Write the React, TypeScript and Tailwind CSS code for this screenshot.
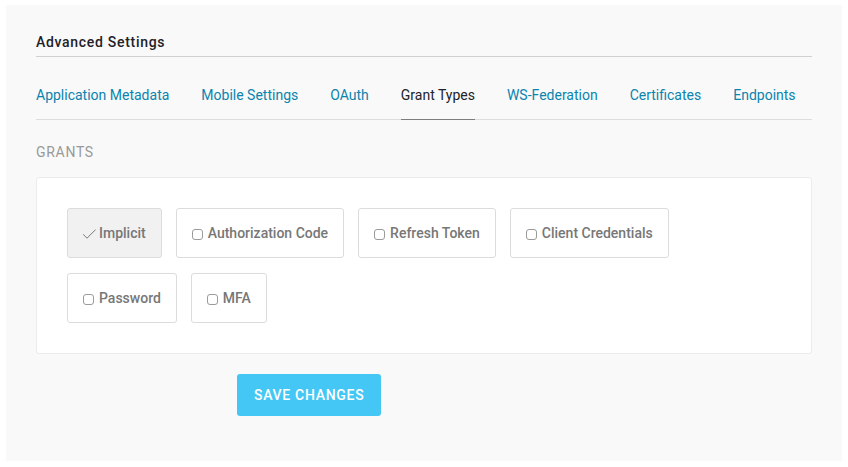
import { useState } from "react";

const tabs = [
  "Application Metadata",
  "Mobile Settings",
  "OAuth",
  "Grant Types",
  "WS-Federation",
  "Certificates",
  "Endpoints",
];

const grants = [
  "Implicit",
  "Authorization Code",
  "Refresh Token",
  "Client Credentials",
  "Password",
  "MFA",
];

function GrantOption({ name, locked }: { name: string; locked: boolean }) {
  const [checked, setChecked] = useState(locked);
  return (
    <label
      className={`flex h-[50px] items-center gap-[5px] rounded-[3px] border border-[#dcdcdc] px-[15px] text-sm font-medium text-[#777777] ${
        checked ? "bg-[#f1f1f1]" : "bg-white"
      }`}
    >
      <span className="grid h-3 w-[11px] items-center justify-items-start">
        <input
          type="checkbox"
          checked={checked}
          onChange={(e) => setChecked(e.target.checked)}
          className="peer col-start-1 row-start-1 mt-0.5 h-[11px] w-[11px] appearance-none rounded-[3px] border border-[#9b9b9b] bg-white checked:border-transparent checked:bg-transparent"
        />
        <svg
          viewBox="0 0 13 10"
          className="pointer-events-none invisible col-start-1 row-start-1 h-[10px] w-[13px] peer-checked:visible"
          fill="none"
          stroke="#777777"
          strokeWidth="1"
        >
          <path d="M0 5.2 L4 9.2 L12.6 0.6" />
        </svg>
      </span>
      <span>{name}</span>
    </label>
  );
}

export default function App() {
  return (
    <div className="bg-white px-1.5 pt-[5px] pb-1.5 font-['Roboto','Liberation_Sans',sans-serif]">
      <main className="bg-[#f9f9f9] px-[30px] pt-7 pb-[45px]">
        <h1 className="border-b border-[#d0d0d0] pb-1 text-sm leading-[19px] font-medium tracking-wider text-[#222228]">
          Advanced Settings
        </h1>

        <nav className="mt-[23px] flex gap-8 border-b border-[#dddddd] text-sm">
          {tabs.map((tab) => (
            <a
              key={tab}
              href="#"
              aria-current={tab === "Grant Types" ? "page" : undefined}
              className={`-mb-px border-b pt-1.5 pb-[14px] leading-[19px] whitespace-nowrap ${
                tab === "Grant Types"
                  ? "border-[#7d7d7d] text-[#222228]"
                  : "border-transparent text-[#0a84ae]"
              }`}
            >
              {tab}
            </a>
          ))}
        </nav>

        <h2 className="mt-[22px] text-sm leading-5 tracking-wider text-[#999999] uppercase">
          Grants
        </h2>

        <section className="mt-[15px] flex flex-wrap gap-x-[14px] gap-y-[15px] rounded-[3px] border border-[#ececec] bg-white p-[30px]">
          {grants.map((grant) => (
            <GrantOption key={grant} name={grant} locked={grant === "Implicit"} />
          ))}
        </section>

        <button
          type="button"
          className="mt-5 ml-[201px] block h-[42px] rounded-[3px] bg-[#44c7f4] px-[17px] text-sm font-medium tracking-wider text-white uppercase"
        >
          Save Changes
        </button>
      </main>
    </div>
  );
}
